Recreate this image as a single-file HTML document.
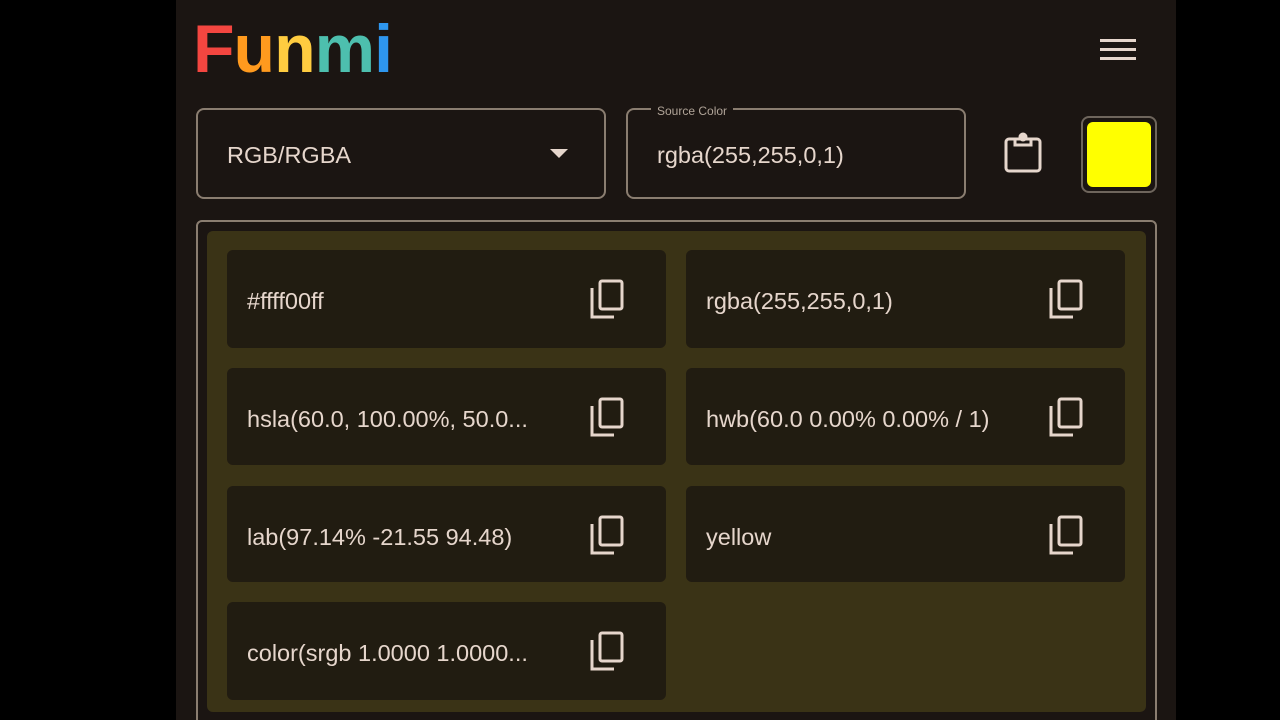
<!DOCTYPE html>
<html style="height:720px;overflow:hidden"><head><meta charset="utf-8"><style>
*{box-sizing:border-box;margin:0;padding:0}
body{width:1280px;height:720px;background:#000;overflow:hidden;position:relative;font-family:"Liberation Sans",sans-serif;color:#e6d6cc}
.page{position:absolute;left:176px;top:0;width:1000px;height:720px;background:#1b1512}
.logo{position:absolute;left:193px;top:9px;font-size:68px;font-weight:bold;letter-spacing:-1px;line-height:80px}
.menu{position:absolute;left:1100px;top:39px;width:36px}
.menu div{height:3px;background:#e6d6cc;margin-bottom:6px}
.box{position:absolute;border:2px solid #8a7d70;border-radius:8px}
.t{position:absolute;font-size:23.5px;color:#e6d6cc}
.panel{position:absolute;left:196px;top:220px;width:961px;height:520px;border:2px solid #8a7d70;border-radius:6px}
.olive{position:absolute;left:207px;top:231px;width:939px;height:481px;background:#3a3316;border-radius:6px}
.card{position:absolute;width:439px;background:#211c11;border-radius:6px}
.card span{position:absolute;left:20px;top:2px;font-size:23.5px;line-height:98px;color:#e6d6cc}
.card svg{position:absolute;left:362px;top:29px}
</style></head><body>
<div class="page"></div>
<div class="logo"><span style="color:#f44640">F</span><span style="color:#ff9a1e">u</span><span style="color:#ffcc40">n</span><span style="color:#4dbfae">m</span><span style="color:#2e96ee">i</span></div>
<div class="menu"><div></div><div></div><div></div></div>
<div class="box" style="left:196px;top:108px;width:410px;height:91px"></div>
<div class="t" style="left:227px;top:142px">RGB/RGBA</div>
<svg style="position:absolute;left:550px;top:149px" width="18" height="10"><path d="M0 0h18L9 9z" fill="#e6d6cc"/></svg>
<div class="box" style="left:626px;top:108px;width:340px;height:91px"></div>
<div style="position:absolute;left:651px;top:104px;padding:0 6px;background:#1b1512;font-size:12px;color:#b0a498">Source Color</div>
<div class="t" style="left:657px;top:142px">rgba(255,255,0,1)</div>
<svg style="position:absolute;left:1003px;top:132px" width="40" height="42" viewBox="0 0 40 42" fill="none" stroke="#e6d6cc" stroke-width="3"><rect x="3" y="7" width="34" height="32" rx="3"/><path d="M12 7v6h16V7" /><circle cx="20" cy="5" r="3" fill="#e6d6cc"/></svg>
<div class="box" style="left:1081px;top:116px;width:76px;height:77px;border-color:#6e655c"></div>
<div style="position:absolute;left:1087px;top:122px;width:64px;height:65px;background:#ffff00;border-radius:6px"></div>
<div class="panel"></div>
<div class="olive"></div>
<div class="card" style="left:227px;top:250px;height:98px"><span>#ffff00ff</span><svg width="36" height="40" viewBox="0 0 36 40" fill="none" stroke="#e6d6cc" stroke-width="3"><rect x="11" y="2" width="22" height="28" rx="2"/><path d="M3 9v29h22"/></svg></div>
<div class="card" style="left:686px;top:250px;height:98px"><span>rgba(255,255,0,1)</span><svg width="36" height="40" viewBox="0 0 36 40" fill="none" stroke="#e6d6cc" stroke-width="3"><rect x="11" y="2" width="22" height="28" rx="2"/><path d="M3 9v29h22"/></svg></div>
<div class="card" style="left:227px;top:368px;height:97px"><span>hsla(60.0, 100.00%, 50.0...</span><svg width="36" height="40" viewBox="0 0 36 40" fill="none" stroke="#e6d6cc" stroke-width="3"><rect x="11" y="2" width="22" height="28" rx="2"/><path d="M3 9v29h22"/></svg></div>
<div class="card" style="left:686px;top:368px;height:97px"><span>hwb(60.0 0.00% 0.00% / 1)</span><svg width="36" height="40" viewBox="0 0 36 40" fill="none" stroke="#e6d6cc" stroke-width="3"><rect x="11" y="2" width="22" height="28" rx="2"/><path d="M3 9v29h22"/></svg></div>
<div class="card" style="left:227px;top:486px;height:96px"><span>lab(97.14% -21.55 94.48)</span><svg width="36" height="40" viewBox="0 0 36 40" fill="none" stroke="#e6d6cc" stroke-width="3"><rect x="11" y="2" width="22" height="28" rx="2"/><path d="M3 9v29h22"/></svg></div>
<div class="card" style="left:686px;top:486px;height:96px"><span>yellow</span><svg width="36" height="40" viewBox="0 0 36 40" fill="none" stroke="#e6d6cc" stroke-width="3"><rect x="11" y="2" width="22" height="28" rx="2"/><path d="M3 9v29h22"/></svg></div>
<div class="card" style="left:227px;top:602px;height:98px"><span>color(srgb 1.0000 1.0000...</span><svg width="36" height="40" viewBox="0 0 36 40" fill="none" stroke="#e6d6cc" stroke-width="3"><rect x="11" y="2" width="22" height="28" rx="2"/><path d="M3 9v29h22"/></svg></div>
</body></html>
